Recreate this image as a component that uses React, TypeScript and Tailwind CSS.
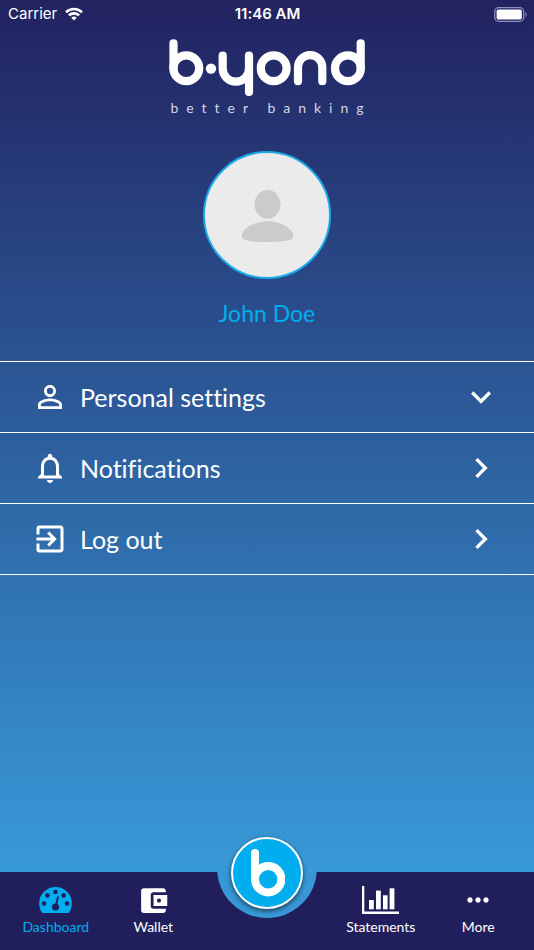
import { useState } from 'react';
import type { ReactNode } from 'react';
import type { IconType } from 'react-icons';
import {
  MdAccountBalanceWallet,
  MdChevronRight,
  MdExitToApp,
  MdExpandMore,
  MdMoreHoriz,
  MdNotificationsNone,
  MdPersonOutline,
} from 'react-icons/md';

function StatusBar() {
  return (
    <div className="grid grid-cols-[1fr_auto_1fr] items-center h-7 pl-2 pr-[7px] font-['Inter','Liberation_Sans',sans-serif] text-[15px] leading-5">
      <div className="flex items-center gap-2">
        <span>Carrier</span>
        <svg viewBox="0 0 18 14" className="w-[18px] h-[14px]" fill="none" stroke="currentColor" strokeWidth="2.6">
          <path d="M1 5.2a11.6 11.6 0 0 1 16 0" />
          <path d="M3.9 8.4a7.4 7.4 0 0 1 10.2 0" />
          <path d="M9 13.6 6.2 10.8a4 4 0 0 1 5.6 0z" fill="currentColor" stroke="none" />
        </svg>
      </div>
      <span className="font-semibold">11:46 AM</span>
      <svg viewBox="0 0 33 15" className="w-[33px] h-[15px] justify-self-end" fill="none">
        <rect x="0.7" y="0.7" width="29" height="13.6" rx="4" stroke="#8f91b8" strokeWidth="1.3" />
        <rect x="2.6" y="2.6" width="25.2" height="9.8" rx="1.6" fill="#fff" />
        <path d="M31.4 5v5c1.7-.7 1.7-4.3 0-5z" fill="#8f91b8" />
      </svg>
    </div>
  );
}

function Logo() {
  return (
    <div className="flex flex-col items-center">
      <svg
        viewBox="0 0 196 58"
        className="w-[196px] h-[58px]"
        fill="none"
        stroke="#fff"
        strokeWidth="8.2"
        strokeLinecap="round"
        role="img"
        aria-label="b.yond"
      >
        <line x1="4.5" y1="4.3" x2="4.5" y2="29" />
        <circle cx="17.3" cy="29.3" r="12.9" />
        <circle cx="42" cy="29.6" r="5.2" fill="#fff" stroke="none" />
        <path d="M53.7 16.5v13a13.15 13.15 0 0 0 26.3 0M80 16.5v36.4" />
        <circle cx="104.7" cy="29.3" r="12.9" />
        <path d="M129 42.2v-14a12.15 12.15 0 0 1 24.3 0v14" />
        <circle cx="178.9" cy="29.3" r="12.9" />
        <line x1="191.7" y1="4.3" x2="191.7" y2="29" />
      </svg>
      <p className="pl-2 pt-px text-[14px] leading-5 tracking-[8px] whitespace-nowrap text-[#d3d5e6]">better banking</p>
    </div>
  );
}

function Avatar() {
  return (
    <div className="size-32 rounded-full border-2 border-[#1ba9e8] bg-[#ebebeb] flex items-center justify-center">
      <svg viewBox="0 0 54 54" className="size-[54px]" fill="#cbcbcb">
        <ellipse cx="27.5" cy="16.3" rx="13" ry="14.3" />
        <path d="M27.5 33.2c14 0 26 7.8 26 14.8 0 4.5-10 6-26 6s-26-1.5-26-6c0-7 12-14.8 26-14.8z" />
      </svg>
    </div>
  );
}

type MenuRowProps = {
  icon: IconType;
  label: string;
  expandable?: boolean;
};

function MenuRow({ icon: Icon, label, expandable }: MenuRowProps) {
  const [open, setOpen] = useState(false);
  const Arrow = expandable ? MdExpandMore : MdChevronRight;

  return (
    <li className="border-b border-white">
      <button
        type="button"
        aria-expanded={expandable ? open : undefined}
        onClick={() => setOpen(!open)}
        className="flex items-center w-full h-[70px] pl-8 pr-[33px] gap-3 text-left"
      >
        <Icon className="size-9 shrink-0" />
        <span className="flex-1 text-[25px] leading-8">{label}</span>
        <Arrow className="size-10 shrink-0" />
      </button>
    </li>
  );
}

function GaugeIcon() {
  return (
    <svg viewBox="0 0 33 26" className="w-[33px] h-[26px]">
      <path
        d="M16.5 0A16.3 16.3 0 0 0 .2 16.3c0 3.3.9 6.3 2.5 9 .3.4.7.7 1.2.7h25.2c.5 0 .9-.3 1.2-.7 1.6-2.7 2.5-5.7 2.5-9A16.3 16.3 0 0 0 16.5 0z"
        fill="currentColor"
      />
      <g fill="#211f5b">
        <circle cx="5" cy="16.5" r="2.3" />
        <circle cx="8.4" cy="8.4" r="2.3" />
        <circle cx="16.5" cy="5" r="2.3" />
        <circle cx="24.6" cy="8.4" r="2.3" />
        <circle cx="28" cy="16.5" r="2.3" />
        <circle cx="16.5" cy="20" r="3.5" />
      </g>
      <path d="M16.5 20 19 10" stroke="#211f5b" strokeWidth="1.8" strokeLinecap="round" />
    </svg>
  );
}

function BarsIcon() {
  return (
    <svg viewBox="0 0 37 28" className="w-[37px] h-7" fill="currentColor">
      <path d="M0 0h2.3v25.6H37V28H0z" />
      <rect x="7" y="14" width="4.8" height="9.3" />
      <rect x="14" y="4.6" width="4.8" height="18.7" />
      <rect x="21" y="9.3" width="4.6" height="14" />
      <rect x="27.6" y="2.3" width="4.8" height="21" />
    </svg>
  );
}

type TabProps = {
  label: string;
  active?: boolean;
  children: ReactNode;
};

function Tab({ label, active, children }: TabProps) {
  return (
    <a href="#" className={active ? 'flex flex-col items-center text-[#00aeef]' : 'flex flex-col items-center text-white'}>
      <span className="flex items-center justify-center h-8">{children}</span>
      <span className="pt-px text-[14px] leading-5">{label}</span>
    </a>
  );
}

function TabBar() {
  return (
    <nav className="relative h-[78px] bg-[#211f5b]">
      <div className="grid grid-cols-[1fr_1fr_130px_1fr_1fr] px-[7px] pt-3">
        <Tab label="Dashboard" active>
          <GaugeIcon />
        </Tab>
        <Tab label="Wallet">
          <MdAccountBalanceWallet className="size-[33px]" />
        </Tab>
        <span />
        <Tab label="Statements">
          <BarsIcon />
        </Tab>
        <Tab label="More">
          <MdMoreHoriz className="size-8" />
        </Tab>
      </div>

      {/* notch cut out of the bar, round button on top */}
      <div className="absolute inset-x-0 top-0 flex items-end justify-center h-[46px] overflow-hidden pointer-events-none">
        <div className="size-[100px] shrink-0 rounded-full bg-[#3898d7]" />
      </div>
      <div className="absolute inset-x-0 -top-[35px] flex justify-center pointer-events-none">
        <button
          type="button"
          aria-label="b.yond home"
          className="size-[72px] rounded-full border-2 border-white bg-[#00aeef] shadow-[0_2px_5px_rgba(0,0,0,0.6)] flex items-center justify-center pointer-events-auto"
        >
          <svg viewBox="0 0 36 48" className="w-9 h-12" fill="none" stroke="#fff" strokeWidth="8" strokeLinecap="round">
            <line x1="6" y1="4" x2="6" y2="30" />
            <circle cx="19.2" cy="30.2" r="13.2" />
          </svg>
        </button>
      </div>
    </nav>
  );
}

export default function App() {
  return (
    <div className="flex flex-col min-h-screen text-white font-['Lato','Liberation_Sans',sans-serif] [font-variant-ligatures:none]">
      <main className="flex-1 bg-linear-to-b/srgb from-[#222260] to-[#389ad9]">
        <StatusBar />
        <div className="flex flex-col items-center pt-[11px]">
          <Logo />
          <div className="pt-[33px]">
            <Avatar />
          </div>
          <h1 className="pt-5 text-[23px] leading-7 text-[#00aeef]">John Doe</h1>
        </div>
        <ul className="mt-[34px] border-t border-white">
          <MenuRow icon={MdPersonOutline} label="Personal settings" expandable />
          <MenuRow icon={MdNotificationsNone} label="Notifications" />
          <MenuRow icon={MdExitToApp} label="Log out" />
        </ul>
      </main>
      <TabBar />
    </div>
  );
}
